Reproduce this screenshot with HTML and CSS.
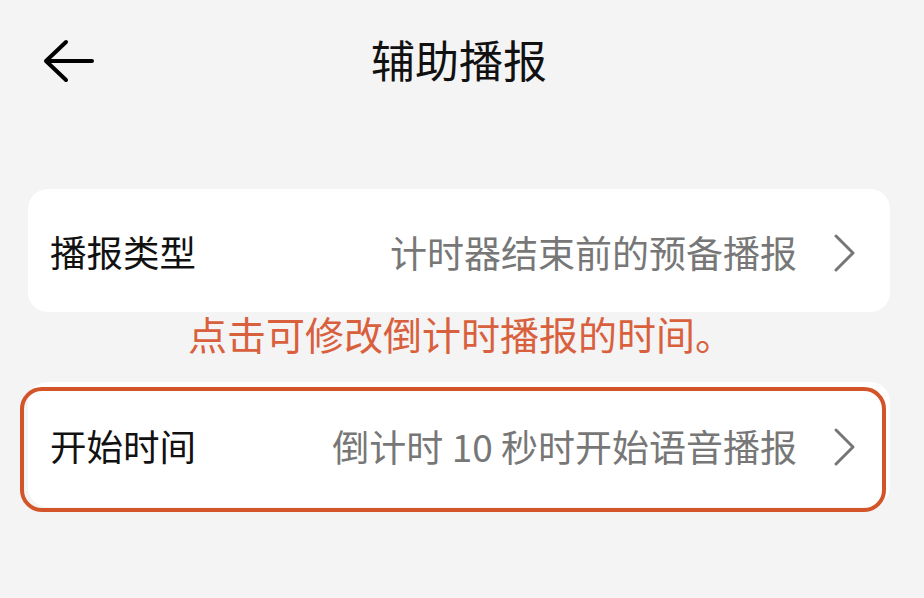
FILE: index.html
```html
<!DOCTYPE html>
<html lang="zh-CN">
<head>
<meta charset="utf-8">
<title>辅助播报</title>
<link rel="stylesheet" href="styles.css">
</head>
<body>
<div class="page">
  <header class="header">
    <svg class="back" width="52" height="44" viewBox="0 0 52 44" aria-hidden="true">
      <path d="M24 3 L4 22 L24 41 M4 22 H50" fill="none" stroke="#000" stroke-width="4" stroke-linecap="round" stroke-linejoin="round"/>
    </svg>
    <h1 class="title">辅助播报</h1>
  </header>

  <div class="card">
    <div class="row">
      <span class="label">播报类型</span>
      <span class="value">计时器结束前的预备播报</span>
      <svg class="chev" width="26" height="40" viewBox="0 0 26 40" aria-hidden="true">
        <path d="M4 3 L21 20 L4 37" fill="none" stroke="#767676" stroke-width="3" stroke-linecap="round" stroke-linejoin="round"/>
      </svg>
    </div>
  </div>

  <p class="hint">点击可修改倒计时播报的时间。</p>

  <div class="card card-focus">
    <div class="row">
      <span class="label">开始时间</span>
      <span class="value">倒计时 10 秒时开始语音播报</span>
      <svg class="chev" width="26" height="40" viewBox="0 0 26 40" aria-hidden="true">
        <path d="M4 3 L21 20 L4 37" fill="none" stroke="#767676" stroke-width="3" stroke-linecap="round" stroke-linejoin="round"/>
      </svg>
    </div>
    <div class="focus-ring"></div>
  </div>
</div>
</body>
</html>
```

FILE: styles.css
```css
* { box-sizing: border-box; }

html, body {
  margin: 0;
  padding: 0;
  background: #f4f4f4;
  font-family: "Noto Sans CJK SC", "Noto Sans", sans-serif;
}

.page {
  width: 924px;
  height: 598px;
  overflow: hidden;
}

.header {
  position: relative;
  height: 124px;
  display: flex;
  align-items: center;
  justify-content: center;
  padding: 0 6px 6px 0;
}

.back {
  position: absolute;
  left: 42px;
  top: 39px;
}

.title {
  margin: 0;
  font-size: 44px;
  font-weight: 400;
  color: #111;
  line-height: 1;
}

.card {
  position: relative;
  margin: 65px 34px 0 28px;
  height: 123px;
  background: #fff;
  border-radius: 20px;
}

.row {
  height: 100%;
  display: flex;
  align-items: center;
  padding: 4px 32px 0 22px;
}

.label {
  font-size: 36.5px;
  color: #111;
  flex: 1;
  line-height: 1;
}

.value {
  font-size: 37px;
  color: #777;
  line-height: 1;
  margin-right: 35px;
}

.chev {
  display: block;
  flex: none;
}

.hint {
  margin: 0;
  height: 42px;
  line-height: 42px;
  text-align: center;
  font-size: 39px;
  color: #d9603d;
  padding-right: 2px;
}

.card-focus {
  margin-top: 28px;
  height: 125px;
}

.focus-ring {
  position: absolute;
  left: -8px;
  right: 4px;
  top: 5px;
  bottom: -5px;
  border: 4px solid #d4542a;
  border-radius: 22px;
  pointer-events: none;
}
```
